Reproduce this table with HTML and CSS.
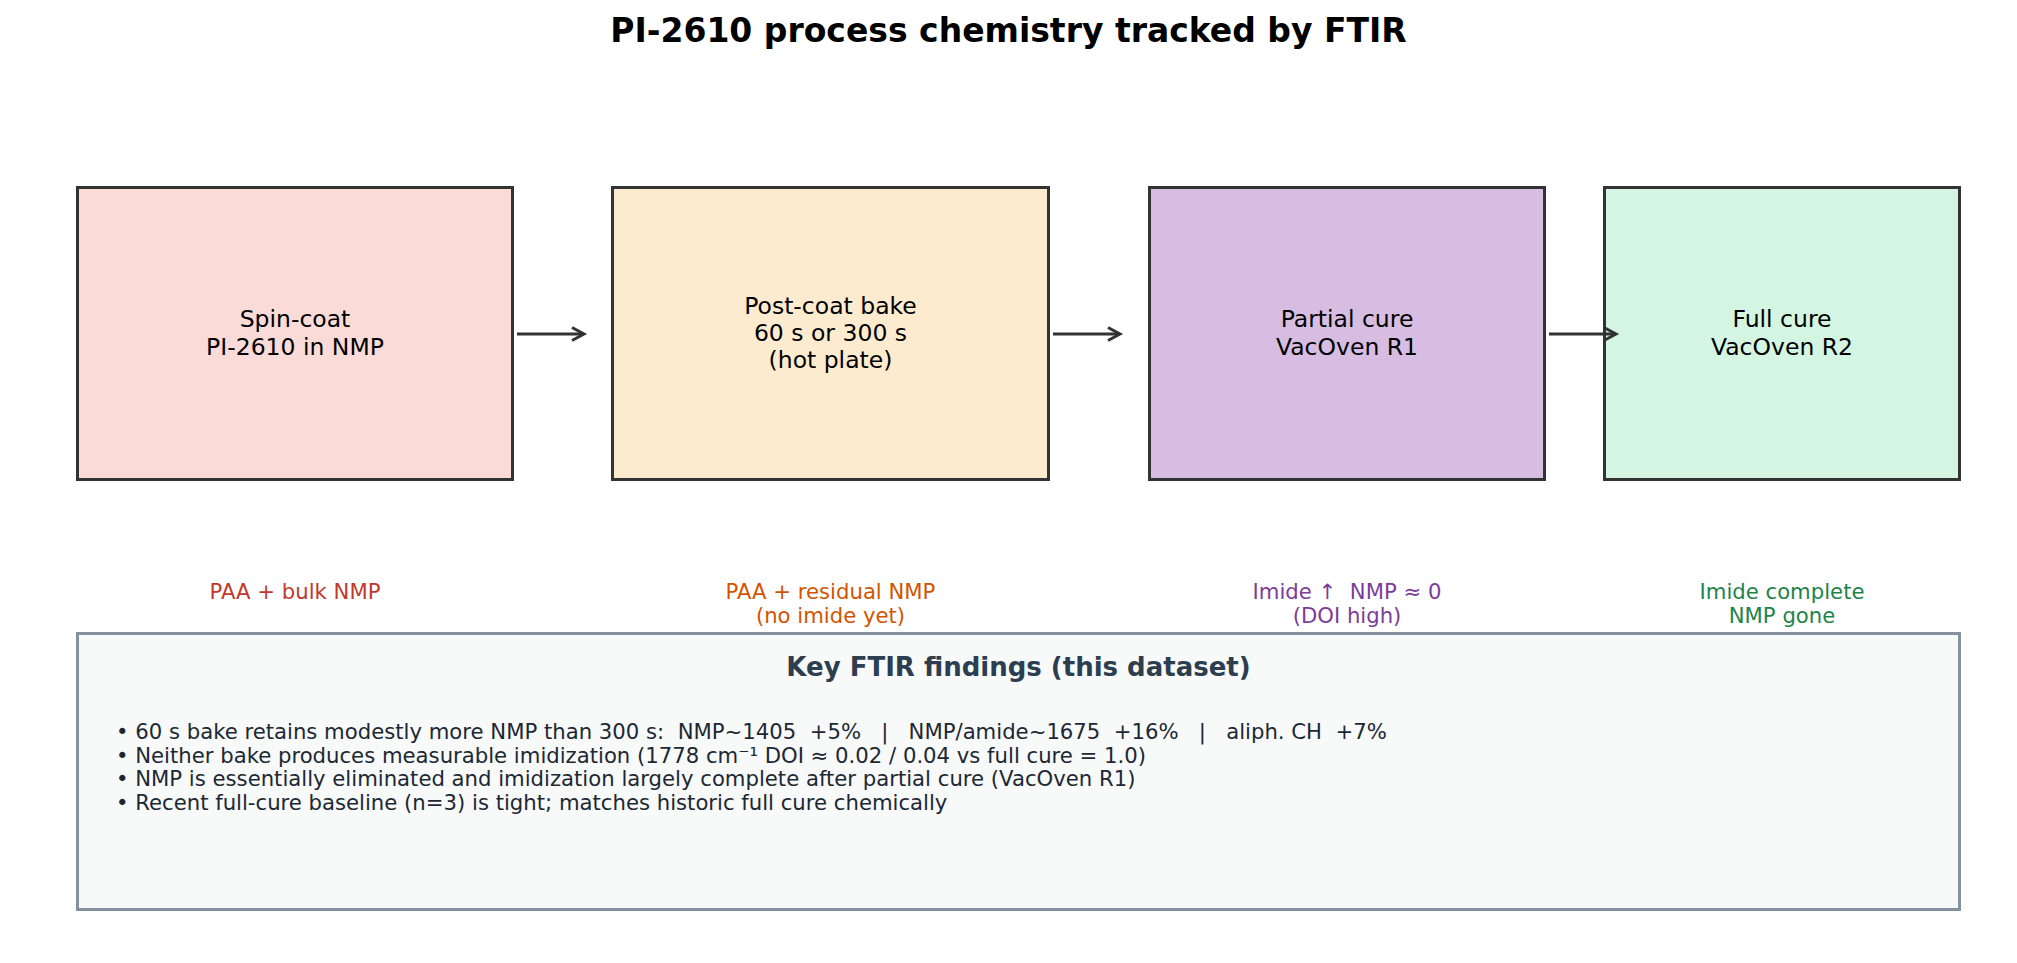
FILE: index.html
```html
<!DOCTYPE html>
<html lang="en">
<head>
<meta charset="utf-8">
<title>PI-2610 process chemistry tracked by FTIR</title>
<link rel="stylesheet" href="styles.css">
</head>
<body>
<div class="page">
  <h1 class="title">PI-2610 process chemistry tracked by FTIR</h1>

  <div class="row boxes">
    <div class="step w1 pink">
      <div class="step-text">Spin-coat<br>PI-2610 in NMP</div>
      <svg class="arrow" width="70" height="20" viewBox="0 0 70 20"><line x1="0" y1="10" x2="67" y2="10"/><polyline points="55,3.5 67,10 55,16.5"/></svg>
    </div>
    <div class="step w2 beige">
      <div class="step-text">Post-coat bake<br>60 s or 300 s<br>(hot plate)</div>
      <svg class="arrow" width="70" height="20" viewBox="0 0 70 20"><line x1="0" y1="10" x2="67" y2="10"/><polyline points="55,3.5 67,10 55,16.5"/></svg>
    </div>
    <div class="step w3 purple">
      <div class="step-text">Partial cure<br>VacOven R1</div>
      <svg class="arrow" width="70" height="20" viewBox="0 0 70 20"><line x1="0" y1="10" x2="67" y2="10"/><polyline points="55,3.5 67,10 55,16.5"/></svg>
    </div>
    <div class="step w4 green">
      <div class="step-text">Full cure<br>VacOven R2</div>
    </div>
  </div>

  <div class="row labels">
    <div class="label w1 c-red">PAA + bulk NMP</div>
    <div class="label w2 c-orange">PAA + residual NMP<br>(no imide yet)</div>
    <div class="label w3 c-purple">Imide ↑  NMP ≈ 0<br>(DOI high)</div>
    <div class="label w4 c-green">Imide complete<br>NMP gone</div>
  </div>

  <div class="findings">
    <div class="findings-title">Key FTIR findings (this dataset)</div>
    <div class="findings-list">• 60 s bake retains modestly more NMP than 300 s:  NMP~1405  +5%   |   NMP/amide~1675  +16%   |   aliph. CH  +7%
• Neither bake produces measurable imidization (1778 cm⁻¹ DOI ≈ 0.02 / 0.04 vs full cure = 1.0)
• NMP is essentially eliminated and imidization largely complete after partial cure (VacOven R1)
• Recent full-cure baseline (n=3) is tight; matches historic full cure chemically</div>
  </div>
</div>
</body>
</html>
```

FILE: styles.css
```css
* { box-sizing: border-box; }

html, body {
  margin: 0;
  padding: 0;
  background: #ffffff;
}

body {
  font-family: "DejaVu Sans", "Liberation Sans", sans-serif;
  color: #000;
}

.page {
  width: 2017px;
  height: 963px;
  padding: 12px 0 0 76px;
}

.title {
  margin: 0 0 0 -76px;
  width: 2017px;
  text-align: center;
  font-size: 33px;
  font-weight: bold;
  line-height: 38px;
  color: #000;
}

.row {
  display: flex;
  align-items: flex-start;
}

.boxes {
  margin-top: 136px;
  height: 295px;
}

.w1 { width: 438px; }
.w2 { width: 439px; margin-left: 97px; }
.w3 { width: 398px; margin-left: 98px; }
.w4 { width: 358px; margin-left: 57px; }

.step {
  position: relative;
  height: 295px;
  border: 3px solid #333333;
  display: flex;
  align-items: center;
  justify-content: center;
}

.step-text {
  text-align: center;
  font-size: 23.5px;
  line-height: 27.2px;
  color: #000;
}

.pink { background: #fadbd8; }
.beige { background: #fdebd0; }
.purple { background: #d7bde2; }
.green { background: #d5f5e3; }

.arrow {
  position: absolute;
  left: calc(100% + 6px);
  top: calc(50% - 10px);
  overflow: visible;
  z-index: 2;
}

.arrow line,
.arrow polyline {
  stroke: #333333;
  stroke-width: 3;
  fill: none;
  stroke-linecap: butt;
  stroke-linejoin: miter;
}

.labels {
  margin-top: 99px;
  height: 52px;
}

.label {
  text-align: center;
  font-size: 21.2px;
  line-height: 24px;
  white-space: pre;
}

.c-red { color: #c0392b; }
.c-orange { color: #d35400; }
.c-purple { color: #7d3c98; }
.c-green { color: #1e8449; }

.findings {
  width: 1885px;
  height: 279px;
  border: 3px solid #85929e;
  background: #f8f9f9;
  padding: 17px 0 0 37px;
}

.findings-title {
  margin-left: -37px;
  text-align: center;
  font-size: 26px;
  font-weight: bold;
  line-height: 31px;
  color: #2c3e50;
}

.findings-list {
  margin-top: 37px;
  white-space: pre;
  font-size: 21.2px;
  line-height: 23.7px;
  color: #1c2833;
}
```
